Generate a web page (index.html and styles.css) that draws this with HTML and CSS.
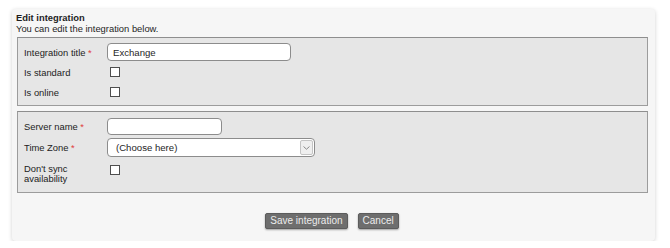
FILE: index.html
```html
<!DOCTYPE html>
<html lang="en">
<head>
    <meta charset="UTF-8">
    <title>Edit integration</title>
    <link rel="stylesheet" href="styles.css">
</head>
<body>
    <div class="panel">
        <div class="panel-title">Edit integration</div>
        <div class="panel-intro">You can edit the integration below.</div>

        <div class="group">
            <div class="row">
                <label class="label" for="title">Integration title <span class="req">*</span></label>
                <input class="text wide" id="title" type="text" value="Exchange">
            </div>
            <div class="row">
                <label class="label" for="standard">Is standard</label>
                <input class="check" id="standard" type="checkbox">
            </div>
            <div class="row">
                <label class="label" for="online">Is online</label>
                <input class="check" id="online" type="checkbox">
            </div>
        </div>

        <div class="group">
            <div class="row">
                <label class="label" for="server">Server name <span class="req">*</span></label>
                <input class="text short" id="server" type="text">
            </div>
            <div class="row row-select">
                <label class="label" for="tz">Time Zone <span class="req">*</span></label>
                <div class="select-wrap">
                    <select class="select" id="tz">
                        <option>(Choose here)</option>
                    </select>
                    <span class="select-arrow">
                        <svg width="7" height="4" viewBox="0 0 7 4"><path d="M0.5 0.5 L3.5 3.2 L6.5 0.5" fill="none" stroke="#8a8a8a" stroke-width="1"/></svg>
                    </span>
                </div>
            </div>
            <div class="row row-top">
                <label class="label label-wrap" for="nosync">Don't sync<br>availability</label>
                <input class="check check-top" id="nosync" type="checkbox">
            </div>
        </div>

        <div class="actions">
            <button class="btn">Save integration</button>
            <button class="btn">Cancel</button>
        </div>
    </div>
</body>
</html>
```

FILE: styles.css
```css
body {
    margin: 0;
    background-color: #ffffff;
    font-family: "Liberation Sans", Arial, sans-serif;
    font-size: 9.4px;
    line-height: 11px;
    color: #1e1e1e;
}
.panel {
    box-sizing: border-box;
    margin: 9px 0 0 12px;
    width: 643px;
    height: 232px;
    padding: 3px 7px 0 4px;
    background-color: #f6f6f6;
    border-radius: 4px;
    box-shadow: 0 1px 4px rgba(0,0,0,0.18);
}
.panel-title {
    font-weight: bold;
}
.group {
    margin: 0 0 5px 1px;
    padding: 5px 6px 4px;
    background-color: #e6e6e6;
    border: 1px solid #9c9c9c;
    border-top-color: #8e8e8e;
}
.panel-intro + .group {
    margin-top: 3px;
}
.group + .group {
    padding-bottom: 8px;
}
.row {
    display: flex;
    align-items: center;
    height: 18px;
    margin-bottom: 2px;
}
.row:last-child {
    margin-bottom: 0;
}
.row-select {
    height: 20px;
}
.row-top {
    align-items: flex-start;
    height: 25px;
}
.label {
    width: 83px;
    flex: none;
    color: #222;
}
.label-wrap {
    padding-top: 5px;
    line-height: 9.5px;
}
.req {
    color: #e03a3a;
}
.text {
    box-sizing: border-box;
    height: 18px;
    padding: 0 5px;
    border: 1px solid #8c8c8c;
    border-radius: 4px;
    background-color: #fff;
    font-family: "Liberation Sans", Arial, sans-serif;
    font-size: 9.6px;
    color: #1e1e1e;
    outline: none;
}
.wide {
    width: 184px;
}
.short {
    width: 115px;
    height: 17px;
}
.check {
    appearance: none;
    -webkit-appearance: none;
    box-sizing: border-box;
    width: 10px;
    height: 10px;
    margin: 0 0 0 3px;
    border: 1px solid #4e4e4e;
    background-color: #fff;
}
.check-top {
    margin-top: 6px;
}
.select-wrap {
    position: relative;
    margin-top: 1px;
}
.select {
    appearance: none;
    -webkit-appearance: none;
    box-sizing: border-box;
    width: 208px;
    height: 19px;
    padding: 0 16px 0 8px;
    border: 1px solid #8c8c8c;
    border-radius: 4px;
    background-color: #fff;
    font-family: "Liberation Sans", Arial, sans-serif;
    font-size: 9.6px;
    color: #1e1e1e;
    outline: none;
}
.select-arrow {
    position: absolute;
    top: 2px;
    right: 2px;
    bottom: 2px;
    width: 11px;
    display: flex;
    align-items: center;
    justify-content: center;
    background-color: #efefef;
    border: 1px solid #c4c4c4;
    border-radius: 2px;
}
.actions {
    display: flex;
    justify-content: center;
    gap: 10px;
    margin-top: 20px;
}
.btn {
    height: 16px;
    padding: 0 4px;
    border: 1px solid #5c5c5c;
    border-radius: 2px;
    background-color: #6e6e6e;
    color: #ececec;
    font-family: "Liberation Sans", Arial, sans-serif;
    font-size: 10px;
    line-height: 14px;
    box-shadow: 0 1px 2px rgba(0,0,0,0.35);
    cursor: pointer;
}
.btn:hover {
    background-color: #5f5f5f;
}
```
